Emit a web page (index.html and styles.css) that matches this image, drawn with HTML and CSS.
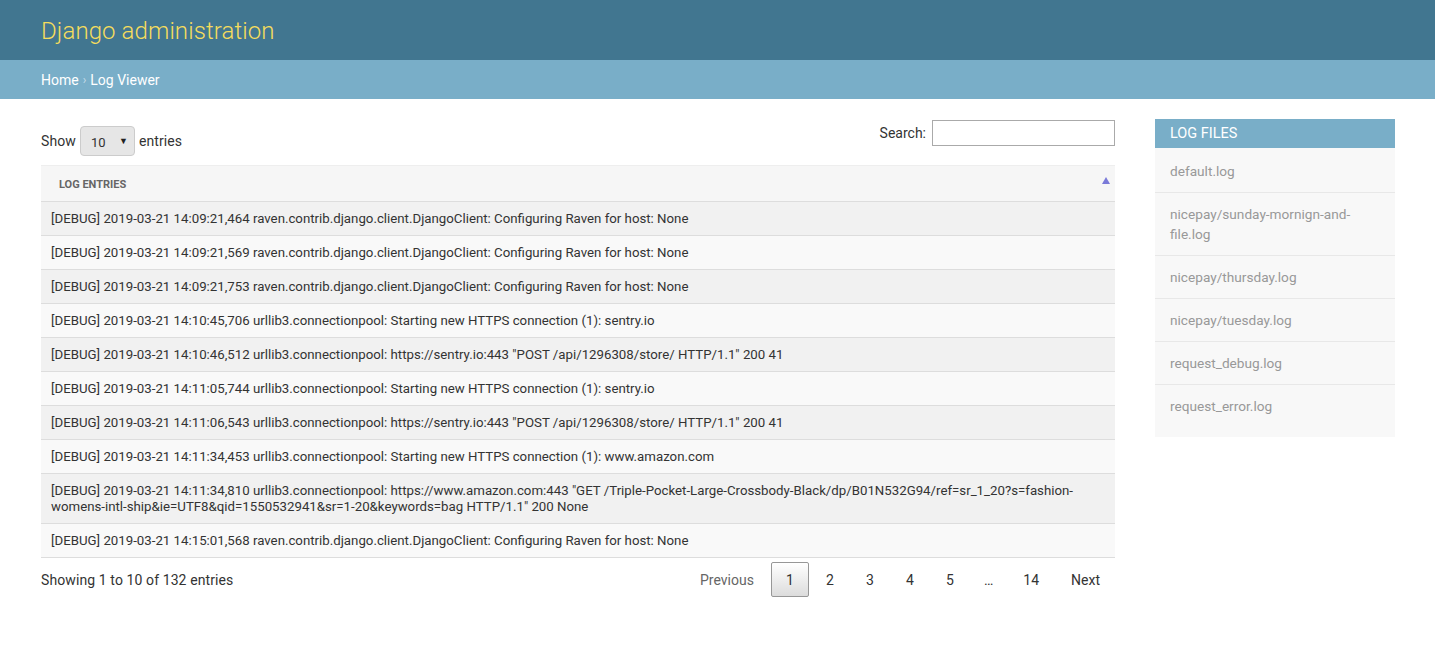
FILE: index.html
```html
<!DOCTYPE html>
<html>
<head>
<meta charset="utf-8">
<title>Log Viewer</title>
<link rel="stylesheet" href="styles.css">
</head>
<body>
<header class="header">
  <h1 class="branding">Django administration</h1>
</header>
<nav class="breadcrumbs"><a href="#">Home</a><span class="sep">›</span><span>Log Viewer</span></nav>
<div class="content">
  <main class="main">
    <div class="controls">
      <div class="length">
        <span>Show</span>
        <span class="select">10<span class="caret">▼</span></span>
        <span>entries</span>
      </div>
      <div class="filter">
        <span>Search:</span>
        <span class="search-input"></span>
      </div>
    </div>
    <table class="log-table">
      <thead>
        <tr><th>Log Entries<span class="sort"></span></th></tr>
      </thead>
      <tbody>
        <tr><td>[DEBUG] 2019-03-21 14:09:21,464 raven.contrib.django.client.DjangoClient: Configuring Raven for host: None</td></tr>
        <tr><td>[DEBUG] 2019-03-21 14:09:21,569 raven.contrib.django.client.DjangoClient: Configuring Raven for host: None</td></tr>
        <tr><td>[DEBUG] 2019-03-21 14:09:21,753 raven.contrib.django.client.DjangoClient: Configuring Raven for host: None</td></tr>
        <tr><td>[DEBUG] 2019-03-21 14:10:45,706 urllib3.connectionpool: Starting new HTTPS connection (1): sentry.io</td></tr>
        <tr><td>[DEBUG] 2019-03-21 14:10:46,512 urllib3.connectionpool: https://sentry.io:443 "POST /api/1296308/store/ HTTP/1.1" 200 41</td></tr>
        <tr><td>[DEBUG] 2019-03-21 14:11:05,744 urllib3.connectionpool: Starting new HTTPS connection (1): sentry.io</td></tr>
        <tr><td>[DEBUG] 2019-03-21 14:11:06,543 urllib3.connectionpool: https://sentry.io:443 "POST /api/1296308/store/ HTTP/1.1" 200 41</td></tr>
        <tr><td>[DEBUG] 2019-03-21 14:11:34,453 urllib3.connectionpool: Starting new HTTPS connection (1): www.amazon.com</td></tr>
        <tr><td>[DEBUG] 2019-03-21 14:11:34,810 urllib3.connectionpool: https://www.amazon.com:443 "GET /Triple-Pocket-Large-Crossbody-Black/dp/B01N532G94/ref=sr_1_20?s=fashion-womens-intl-ship&amp;ie=UTF8&amp;qid=1550532941&amp;sr=1-20&amp;keywords=bag HTTP/1.1" 200 None</td></tr>
        <tr><td>[DEBUG] 2019-03-21 14:15:01,568 raven.contrib.django.client.DjangoClient: Configuring Raven for host: None</td></tr>
      </tbody>
    </table>
    <div class="footer-row">
      <div class="info">Showing 1 to 10 of 132 entries</div>
      <div class="paginate">
        <span class="pbtn disabled">Previous</span>
        <span class="pbtn current">1</span>
        <span class="pbtn">2</span>
        <span class="pbtn">3</span>
        <span class="pbtn">4</span>
        <span class="pbtn">5</span>
        <span class="ellipsis">…</span>
        <span class="pbtn">14</span>
        <span class="pbtn">Next</span>
      </div>
    </div>
  </main>
  <aside class="sidebar">
    <h2 class="side-title">Log Files</h2>
    <ul class="file-list">
      <li>default.log</li>
      <li>nicepay/sunday-mornign-and-file.log</li>
      <li>nicepay/thursday.log</li>
      <li>nicepay/tuesday.log</li>
      <li>request_debug.log</li>
      <li>request_error.log</li>
    </ul>
  </aside>
</div>
</body>
</html>
```
FILE: styles.css
```css
* { box-sizing: border-box; }
html, body { margin: 0; padding: 0; }
body {
  font-family: Roboto, "Liberation Sans", sans-serif;
  font-size: 14px;
  color: #333;
  background: #fff;
}
.header {
  background: #417690;
  height: 60px;
  padding: 0 40px 0 41px;
  display: flex;
  align-items: center;
}
.branding {
  margin: 0;
  font-size: 24px;
  font-weight: 300;
  color: #f5dd5d;
  line-height: 1;
  padding-top: 2px;
  letter-spacing: 0.1px;
}
.breadcrumbs {
  background: #79aec8;
  height: 39px;
  padding: 0 40px 0 41px;
  display: flex;
  align-items: center;
  color: #fff;
  font-size: 14px;
}
.breadcrumbs a { color: #fff; text-decoration: none; }
.breadcrumbs .sep { color: #c4dce8; font-size: 12px; margin: 0 4px; }
.content {
  display: flex;
  padding: 20px 40px 20px 41px;
  gap: 40px;
}
.main { flex: 1; min-width: 0; }
.controls {
  display: flex;
  justify-content: space-between;
  align-items: flex-start;
  height: 46px;
}
.length {
  display: flex;
  align-items: center;
  gap: 4px;
  margin-top: 7px;
  letter-spacing: 0.1px;
}
.select {
  width: 55px;
  height: 30px;
  background: #e6e6e6;
  border: 1px solid #ccc;
  border-radius: 4px;
  display: flex;
  align-items: center;
  justify-content: space-between;
  padding: 2px 6px 0 10px;
  font-size: 13px;
  color: #333;
}
.caret { font-size: 9px; color: #222; margin-top: -3px; }
.filter {
  display: flex;
  align-items: center;
  gap: 6px;
  margin-top: 1px;
}
.search-input {
  width: 183px;
  height: 26px;
  border: 1px solid #aaa;
  background: #fff;
}
.log-table {
  width: 100%;
  border-collapse: collapse;
  font-size: 13.25px;
}
.log-table th {
  text-align: left;
  font-size: 11px;
  font-weight: 700;
  text-transform: uppercase;
  color: #666;
  background: #f6f6f6;
  border-top: 1px solid #eee;
  border-bottom: 1px solid #ddd;
  height: 36px;
  padding: 1px 10px 0 18px;
  position: relative;
}
.sort {
  position: absolute;
  right: 5px;
  top: 11px;
  width: 0;
  height: 0;
  border-left: 4.5px solid transparent;
  border-right: 4.5px solid transparent;
  border-bottom: 7px solid #7a7ad8;
}
.log-table td {
  padding: 9px 10px 8px;
  line-height: 16px;
  border-bottom: 1px solid #ddd;
  color: #333;
}
.log-table tbody tr:nth-child(odd) td { background: #f1f1f1; }
.log-table tbody tr:nth-child(even) td { background: #f9f9f9; }
.footer-row {
  display: flex;
  justify-content: space-between;
  align-items: flex-start;
  padding-top: 4px;
}
.info { padding-top: 10px; letter-spacing: 0.1px; }
.paginate {
  display: flex;
  align-items: center;
  gap: 2px;
}
.pbtn {
  min-width: 38px;
  height: 35px;
  padding: 0 14px;
  display: flex;
  align-items: center;
  justify-content: center;
  border: 1px solid transparent;
  border-radius: 2px;
  color: #333;
}
.pbtn.disabled { color: #666; }
.pbtn.current {
  border-color: #979797;
  background: linear-gradient(to bottom, #fff 0%, #dcdcdc 100%);
}
.ellipsis { padding: 0 13px; color: #333; }
.sidebar {
  width: 240px;
  flex: none;
  align-self: flex-start;
  background: #f8f8f8;
}
.side-title {
  margin: 0;
  background: #79aec8;
  color: #fff;
  font-size: 14.5px;
  font-weight: 400;
  text-transform: uppercase;
  height: 29px;
  line-height: 30px;
  padding: 0 15px;
}
.file-list {
  list-style: none;
  margin: 0;
  padding: 2px 0 10px;
}
.file-list li {
  padding: 11px 40px 11px 15px;
  line-height: 20px;
  font-size: 13.65px;
  color: #999;
  border-bottom: 1px solid #e8e8e8;
}
.file-list li:last-child { border-bottom: none; }
```
